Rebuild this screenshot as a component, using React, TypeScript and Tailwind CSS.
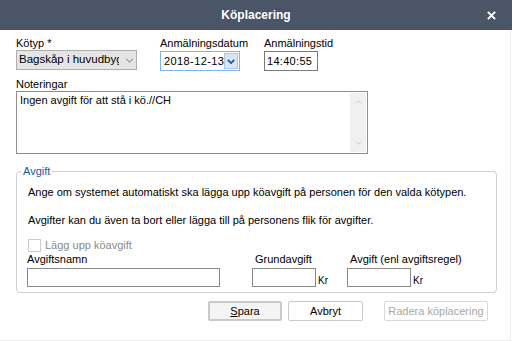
import React from 'react';

const Chevron = ({ className, sw = 1 }: { className?: string; sw?: number }) => (
  <svg viewBox="0 0 10 6" className={className} fill="none" stroke="currentColor">
    <path d="M1 1l4 4 4-4" strokeWidth={sw} />
  </svg>
);

const Label = ({ children }: { children: React.ReactNode }) => (
  <div className="h-[13px] whitespace-nowrap text-[11px] leading-[13px] text-black">{children}</div>
);

export default function App() {
  return (
    <div
      className="h-[341px] w-[512px] overflow-hidden bg-white text-[11px]"
      style={{ fontFamily: '"Liberation Sans", Arial, sans-serif' }}
    >
      <div className="relative flex h-[30px] items-center justify-center bg-[#4a5567]">
        <span className="text-[12px] font-bold text-white">Köplacering</span>
        <svg viewBox="0 0 10 10" className="absolute right-[16px] top-[11px] h-[9px] w-[9px]">
          <path d="M1 1l8 8M9 1l-8 8" stroke="white" strokeWidth="2.2" />
        </svg>
      </div>

      <div className="h-[311px] w-[511px] border-b border-r border-[#ececec] px-[16px] pt-[7px]">
        {/* row 1 */}
        <div className="flex">
          <div className="w-[121px]">
            <Label>Kötyp *</Label>
            <div className="flex h-[20px] items-center border border-[#adadad] bg-[#e5e5e5] pl-[2px]">
              <span className="w-[100px] overflow-hidden whitespace-nowrap text-[11.5px]">Bagskåp i huvudbyggnad</span>
              <Chevron className="ml-[6px] h-[5px] w-[9px] text-[#555]" />
            </div>
          </div>
          <div className="ml-[23px] w-[80px]">
            <Label>Anmälningsdatum</Label>
            <div className="mt-[1px] flex h-[20px] items-center border border-[#7eb4ea] bg-white">
              <span className="flex-1 whitespace-nowrap pl-[3px] text-[11px] tracking-[0.4px]">2018-12-13</span>
              <div className="mr-[1px] flex h-[16px] w-[16px] items-center justify-center border border-[#a9c6e8] bg-[#d7e6f7]">
                <Chevron className="h-[5px] w-[8px] text-[#23508f]" sw={2} />
              </div>
            </div>
          </div>
          <div className="ml-[24px] w-[54px]">
            <Label>Anmälningstid</Label>
            <div className="mt-[1px] flex h-[20px] items-center whitespace-nowrap border border-[#7a7a7a] bg-white pl-[2px] text-[11px] tracking-[0.3px]">
              14:40:55
            </div>
          </div>
        </div>

        {/* notes */}
        <div className="mt-[7px]">
          <Label>Noteringar</Label>
          <div className="flex h-[63px] w-[352px] border border-[#8f8f8f] bg-white">
            <div className="flex-1 pl-[3px] pt-[2px] text-[11px] leading-[13px]">Ingen avgift för att stå i kö.//CH</div>
            <div className="my-[1px] mr-[1px] flex w-[16px] flex-col items-center justify-between bg-[#f0f0f0] py-[7px]">
              <Chevron className="h-[4px] w-[7px] rotate-180 text-[#b5b5b5]" />
              <Chevron className="h-[4px] w-[7px] text-[#b5b5b5]" />
            </div>
          </div>
        </div>

        {/* fee */}
        <fieldset className="mt-[11px] w-[481px] rounded-[4px] border border-[#cfcfcf] pb-[5px] pl-[11px] pr-[8px]">
          <legend className="-ml-[7px] px-[2px] text-[11px] leading-[13px] text-[#1d5aa8]">Avgift</legend>
          <div className="mt-[7px] whitespace-nowrap text-[11px] leading-[14px]">
            Ange om systemet automatiskt ska lägga upp köavgift på personen för den valda kötypen.
          </div>
          <div className="mt-[14px] whitespace-nowrap text-[11px] leading-[14px]">
            Avgifter kan du även ta bort eller lägga till på personens flik för avgifter.
          </div>
          <div className="mt-[12px] flex h-[13px] items-center">
            <div className="h-[13px] w-[13px] border border-[#cccccc] bg-white" />
            <span className="ml-[4px] text-[11px] leading-[13px] text-[#8a8a8a]">Lägg upp köavgift</span>
          </div>
          <div className="mt-[1px] flex items-end">
            <div className="-ml-[1px] w-[193px]">
              <Label>Avgiftsnamn</Label>
              <div className="mt-[2px] h-[19px] border border-[#8a8a8a]" />
            </div>
            <div className="ml-[32px]">
              <div className="pl-[3px]">
                <Label>Grundavgift</Label>
              </div>
              <div className="mt-[2px] flex items-end">
                <div className="h-[19px] w-[64px] border border-[#8a8a8a]" />
                <span className="ml-[2px] text-[10px] leading-[12px]">Kr</span>
              </div>
            </div>
            <div className="ml-[19px]">
              <div className="pl-[3px]">
                <Label>Avgift (enl avgiftsregel)</Label>
              </div>
              <div className="mt-[2px] flex items-end">
                <div className="h-[19px] w-[64px] border border-[#8a8a8a]" />
                <span className="ml-[2px] text-[10px] leading-[12px]">Kr</span>
              </div>
            </div>
          </div>
        </fieldset>

        {/* buttons */}
        <div className="mt-[8px] flex pl-[192px]">
          <button className="h-[20px] w-[74px] whitespace-nowrap rounded-[2px] border-2 border-[#c9c9c9] bg-[#f4f4f4] text-[11px]">
            <span className="underline">S</span>para
          </button>
          <button className="ml-[6px] h-[20px] w-[75px] whitespace-nowrap rounded-[2px] border border-[#c9c9c9] bg-white text-[11px]">
            Avbryt
          </button>
          <button className="ml-[21px] h-[20px] w-[104px] whitespace-nowrap rounded-[2px] border border-[#d9d9d9] bg-white text-[11px] text-[#a8a8a8]">
            Radera köplacering
          </button>
        </div>
      </div>
    </div>
  );
}
